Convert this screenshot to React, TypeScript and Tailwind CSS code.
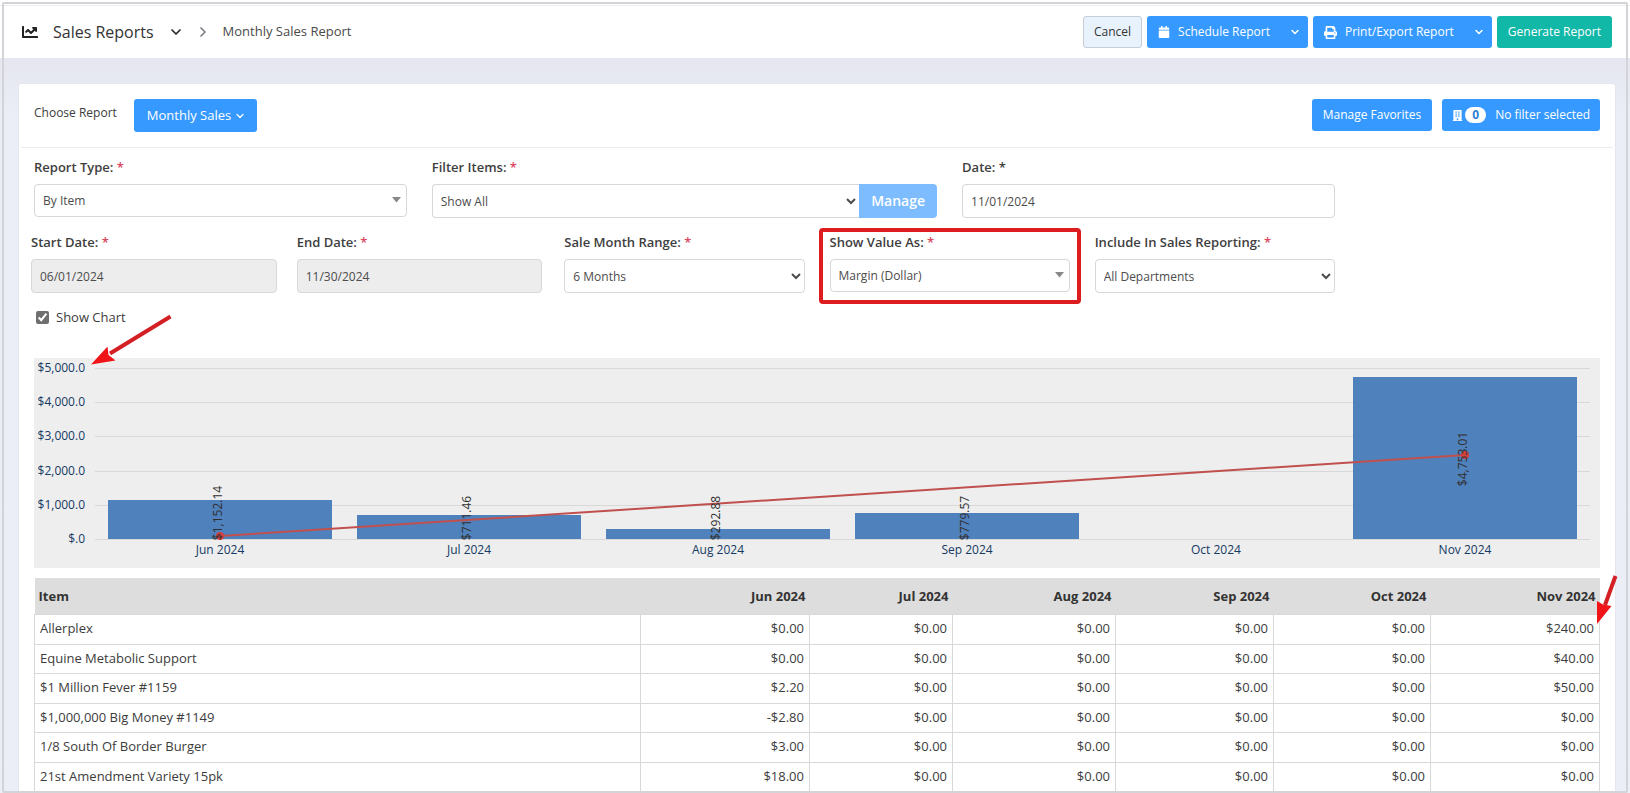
import { useState, type ReactNode } from 'react'
import { FaBuilding, FaCalendar, FaChartLine, FaPrint } from 'react-icons/fa'
import { ChevronDown, ChevronRight } from 'lucide-react'

const months = ['Jun 2024', 'Jul 2024', 'Aug 2024', 'Sep 2024', 'Oct 2024', 'Nov 2024']

const rows = [
  { item: 'Allerplex', values: ['$0.00', '$0.00', '$0.00', '$0.00', '$0.00', '$240.00'] },
  { item: 'Equine Metabolic Support', values: ['$0.00', '$0.00', '$0.00', '$0.00', '$0.00', '$40.00'] },
  { item: '$1 Million Fever #1159', values: ['$2.20', '$0.00', '$0.00', '$0.00', '$0.00', '$50.00'] },
  { item: '$1,000,000 Big Money #1149', values: ['-$2.80', '$0.00', '$0.00', '$0.00', '$0.00', '$0.00'] },
  { item: '1/8 South Of Border Burger', values: ['$3.00', '$0.00', '$0.00', '$0.00', '$0.00', '$0.00'] },
  { item: '21st Amendment Variety 15pk', values: ['$18.00', '$0.00', '$0.00', '$0.00', '$0.00', '$0.00'] },
]

// labelY is the middle of the rotated value label
const bars = [
  { top: 142, label: '$1,152.14', labelY: 155 },
  { top: 157, label: '$711.46', labelY: 160 },
  { top: 171, label: '$292.88', labelY: 160 },
  { top: 155, label: '$779.57', labelY: 160 },
  null,
  { top: 19, label: '$4,753.01', labelY: 101 },
]

const axis = [
  { label: '$5,000.0', y: 10 },
  { label: '$4,000.0', y: 44 },
  { label: '$3,000.0', y: 78 },
  { label: '$2,000.0', y: 113 },
  { label: '$1,000.0', y: 147 },
  { label: '$.0', y: 181 },
]

const fieldClass =
  'block w-full h-[34px] rounded-[4px] border border-[#d5d7d8] bg-white text-xs text-[#4c4c4c]'

function Field({ id, label, plain, children }: { id: string; label: string; plain?: boolean; children: ReactNode }) {
  return (
    <div className="min-w-0 flex-1">
      <label htmlFor={id} className="mb-[7px] block leading-5 font-semibold text-[#3e3e3e]">
        {label} <span className={plain ? '' : 'text-[#d9485f]'}>*</span>
      </label>
      {children}
    </div>
  )
}

function ArrowSelect({ id, value }: { id: string; value: string }) {
  return (
    <div className="relative">
      <select id={id} className={`${fieldClass} h-[33px]! appearance-none pl-2 pr-8`}>
        <option>{value}</option>
      </select>
      <svg className="pointer-events-none absolute right-[6px] top-[13px]" width="9" height="6" viewBox="0 0 9 6">
        <path d="M0 0h9L4.5 5.5z" fill="#888" />
      </svg>
    </div>
  )
}

function SplitButton({ icon, label }: { icon: ReactNode; label: string }) {
  return (
    <div className="flex h-8 rounded-[3px] bg-[#3699ff] text-white">
      <button className="flex items-center gap-2 pl-[11px] pr-3">
        {icon}
        {label}
      </button>
      <button aria-label={`${label} options`} className="flex w-[26px] items-center justify-center">
        <ChevronDown size={12} strokeWidth={3} />
      </button>
    </div>
  )
}

function Chart() {
  return (
    <svg viewBox="0 0 1566 210" className="block w-full" fontSize="12">
      <rect width="1566" height="210" fill="#eeeeee" />
      {axis.map((a) => (
        <g key={a.label}>
          <line x1="61" x2="1556" y1={a.y + 0.5} y2={a.y + 0.5} stroke="#d8d8d8" />
          <text x="51" y={a.y + 4} textAnchor="end" fill="#153a63">{a.label}</text>
        </g>
      ))}
      {bars.map((b, i) =>
        b ? <rect key={i} x={74 + i * 249} y={b.top} width="224" height={181 - b.top} fill="#4f81bc" /> : null
      )}
      {months.map((m, i) => (
        <text key={m} x={186 + i * 249} y="196" textAnchor="middle" fill="#153a63">{m}</text>
      ))}
      <line x1="186" y1="178" x2="1431" y2="97" stroke="#c0504e" strokeWidth="2" />
      <circle cx="186" cy="178" r="4" fill="#d43f3f" />
      <circle cx="1431" cy="97" r="4" fill="#d43f3f" />
      {bars.map((b, i) =>
        b ? (
          <text
            key={i}
            transform={`translate(${188 + i * 249} ${b.labelY}) rotate(-90)`}
            textAnchor="middle"
            fill="#2f2f2f"
          >
            {b.label}
          </text>
        ) : null
      )}
    </svg>
  )
}

export default function App() {
  const [showChart, setShowChart] = useState(true)

  return (
    <div className="relative flex min-h-screen flex-col overflow-hidden bg-[#ebeef7] font-['Open_Sans',sans-serif] text-[13px] text-[#3c3c3c]">
      <div className="bg-white pt-[5px]">
        <header className="flex h-[53px] items-center border-t border-[#ececec] pl-[22px] pr-[18px]">
          <FaChartLine size={16} className="text-[#222]" />
          <h1 className="ml-[15px] text-base text-[#333]">Sales Reports</h1>
          <button aria-label="Sales Reports menu" className="ml-[14px]">
            <ChevronDown size={16} strokeWidth={2.5} className="text-[#222]" />
          </button>
          <ChevronRight size={16} strokeWidth={2.5} className="ml-[11px] text-[#7c7c84]" />
          <a href="#" className="ml-[12px] text-[#4a4a4a]">Monthly Sales Report</a>
          <div className="ml-auto flex gap-[5px] text-xs">
            <button className="h-8 rounded-[3px] border border-[#c6cdd5] bg-[#e8f2fc] px-[10px] text-[#333]">Cancel</button>
            <SplitButton icon={<FaCalendar size={12} />} label="Schedule Report" />
            <SplitButton icon={<FaPrint size={13} />} label="Print/Export Report" />
            <button className="h-8 rounded-[3px] bg-[#11b7a7] px-[11px] text-white">Generate Report</button>
          </div>
        </header>
      </div>
      <div className="flex flex-1 flex-col bg-linear-to-b from-[#e5e6f0] to-[#ebeef7] to-[60px] pl-[18px] pr-[14px] pt-[25px]">
        <main className="flex-1 rounded-t-[3px] border border-b-0 border-[#e6e7ee] bg-white">
          <div className="mx-[2px] flex h-16 items-start border-b border-[#ebebeb] px-[13px] pt-[15px] text-xs">
            <span className="leading-7">Choose Report</span>
            <button className="ml-[17px] flex h-[33px] items-center gap-[3px] rounded-[3px] bg-[#3699ff] pl-[13px] pr-[11px] text-[13px] text-white">
              Monthly Sales
              <ChevronDown size={12} strokeWidth={2.5} />
            </button>
            <div className="ml-auto flex gap-[10px]">
              <button className="h-8 rounded-[3px] bg-[#3699ff] px-[11px] text-white">Manage Favorites</button>
              <button className="flex h-8 items-center rounded-[3px] bg-[#3699ff] px-[10px] text-white">
                <FaBuilding size={11} />
                <span className="ml-[2px] mr-[9px] rounded-full bg-white px-[7px] leading-4 font-bold text-[#2f7fd0]">0</span>
                No filter selected
              </button>
            </div>
          </div>

          <div className="px-[15px] pt-[9px]">
            <form className="grid grid-cols-12 gap-x-[25px] gap-y-[14px]">
              <div className="col-span-3">
                <Field id="report-type" label="Report Type:">
                  <ArrowSelect id="report-type" value="By Item" />
                </Field>
              </div>
              <div className="col-span-4">
                <Field id="filter-items" label="Filter Items:">
                  <div className="flex">
                    <select id="filter-items" className={`${fieldClass} rounded-r-none border-r-0 pl-1`}>
                      <option>Show All</option>
                    </select>
                    <button type="button" className="h-[34px] rounded-r-[4px] bg-[#7cbcff] px-3 text-sm font-semibold text-white">
                      Manage
                    </button>
                  </div>
                </Field>
              </div>
              <div className="col-span-3">
                <Field id="date" label="Date:" plain>
                  <input id="date" defaultValue="11/01/2024" className={`${fieldClass} px-2`} />
                </Field>
              </div>

              <div className="col-span-4 col-start-1 -mx-[3px] flex gap-5">
                <Field id="start-date" label="Start Date:">
                  <input id="start-date" readOnly value="06/01/2024" className={`${fieldClass} bg-[#ededed]! px-2`} />
                </Field>
                <Field id="end-date" label="End Date:">
                  <input id="end-date" readOnly value="11/30/2024" className={`${fieldClass} bg-[#ededed]! px-2`} />
                </Field>
              </div>
              <div className="col-span-2">
                <Field id="month-range" label="Sale Month Range:">
                  <select id="month-range" className={`${fieldClass} pl-1`}>
                    <option>6 Months</option>
                  </select>
                </Field>
              </div>
              <div className="relative col-span-2">
                <Field id="show-value" label="Show Value As:">
                  <ArrowSelect id="show-value" value="Margin (Dollar)" />
                </Field>
                <div className="pointer-events-none absolute -inset-x-[11px] -bottom-[11px] -top-1 rounded-[4px] border-4 border-[#dc1c1e]" />
              </div>
              <div className="col-span-2">
                <Field id="include" label="Include In Sales Reporting:">
                  <select id="include" className={`${fieldClass} pl-1`}>
                    <option>All Departments</option>
                  </select>
                </Field>
              </div>
            </form>

            <label className="mt-[14px] flex w-fit items-center gap-[7px] pl-[2px] leading-5">
              <input
                type="checkbox"
                checked={showChart}
                onChange={(e) => setShowChart(e.target.checked)}
                className="size-[13px] accent-[#6f6f6f]"
              />
              Show Chart
            </label>

            <div className="relative mt-[31px]">
              {showChart && <Chart />}
              <svg className="pointer-events-none absolute left-[56px] -top-[44px]" width="84" height="54" viewBox="0 0 84 54">
                <path d="M80.5 2.500 20 39.500" stroke="#d32024" strokeWidth="4" fill="none" />
                <path d="M1 50.500 17.500 32.500 18.500 41 25.500 46.500z" fill="#f01418" />
              </svg>
            </div>

            <div className="relative mt-[10px]">
              <table className="w-full table-fixed border-collapse">
                <colgroup>
                  <col />
                  <col className="w-[169px]" />
                  <col className="w-[143px]" />
                  <col className="w-[163px]" />
                  <col className="w-[158px]" />
                  <col className="w-[157px]" />
                  <col className="w-[169px]" />
                </colgroup>
                <thead>
                  <tr className="h-9 bg-[#dddddd] text-[#333]">
                    <th className="px-1 pt-[2px] text-left font-bold">Item</th>
                    {months.map((m) => (
                      <th key={m} className="px-1 pt-[2px] text-right font-bold">{m}</th>
                    ))}
                  </tr>
                </thead>
                <tbody>
                  {rows.map((row) => (
                    <tr key={row.item} className="odd:h-[30px] even:h-[29px]">
                      <td className="border border-[#d9d9d9] px-[5px]">{row.item}</td>
                      {row.values.map((v, i) => (
                        <td key={i} className="border border-[#d9d9d9] px-[5px] text-right">{v}</td>
                      ))}
                    </tr>
                  ))}
                </tbody>
              </table>
              <svg className="pointer-events-none absolute -right-[18px] -top-1" width="24" height="54" viewBox="0 0 24 54">
                <path d="M21.500 2 11 31" stroke="#d32024" strokeWidth="4" fill="none" />
                <path d="M3 50 3 27 9 30.500 17.500 32z" fill="#f01418" />
              </svg>
            </div>
          </div>
        </main>
      </div>

      {/* outer frame */}
      <div className="pointer-events-none absolute inset-x-[2px] bottom-0 top-[2px] rounded-[2px] border-2 border-[#d3d4d8]" />
    </div>
  )
}
